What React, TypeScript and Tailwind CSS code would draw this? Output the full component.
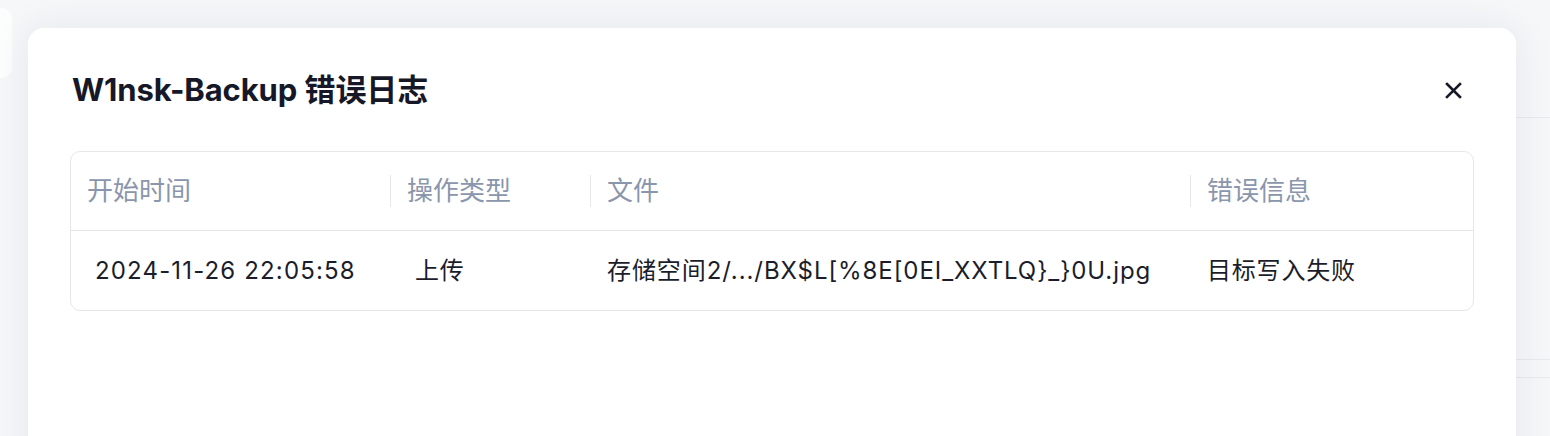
import React from 'react';

const FONT = 'font-["Inter","Noto_Sans_CJK_SC",sans-serif]';

interface LogRow {
  start: string;
  op: string;
  file: string;
  error: string;
}

const rows: LogRow[] = [
  {
    start: '2024-11-26 22:05:58',
    op: '上传',
    file: '存储空间2/.../BX$L[%8E[0EI_XXTLQ}_}0U.jpg',
    error: '目标写入失败',
  },
];

const HeaderCell: React.FC<{ label: string; divider?: boolean; width: string }> = ({ label, divider, width }) => (
  <div className={`${width} flex items-center h-full`}>
    {divider && <div className="w-px h-[32px] bg-[#e6e7ea] shrink-0" />}
    <span className="pl-[16px] text-[26px] leading-none text-[#8a96ac]">{label}</span>
  </div>
);

export default function App() {
  return (
    <div className={`${FONT} relative w-[1550px] h-[436px] overflow-hidden bg-[#f6f7f9]`}>
      {/* page behind the overlay */}
      <div className="flex h-full">
        <div className="w-[12px] mt-[8px] h-[70px] bg-white rounded-r-[10px] opacity-70" />
        <div className="flex-1 flex flex-col pt-[117px]">
          <div className="h-px bg-[#e9e9ee] ml-auto w-[40px]" />
          <div className="h-[241px]" />
          <div className="h-px bg-[#e9e9ee] ml-auto w-[40px]" />
          <div className="h-[17px]" />
          <div className="h-px bg-[#e9e9ee] ml-auto w-[40px]" />
        </div>
      </div>

      {/* modal */}
      <div className="absolute left-[28px] top-[28px] w-[1488px] h-[460px] bg-white rounded-[16px] shadow-[0_0_40px_rgba(30,35,60,0.08)]">
        <div className="flex items-center justify-between pl-[44px] pr-[54px] pt-[32px] h-[90px]">
          <h1 className="text-[31px] font-bold text-[#161827] leading-none tracking-[-0.1px]">W1nsk-Backup 错误日志</h1>
          <button aria-label="关闭" className="text-[#161827] mt-[2px]">
            <svg width="17" height="17" viewBox="0 0 17 17" fill="none" stroke="currentColor" strokeWidth="2.6" strokeLinecap="square">
              <path d="M2 2 L15 15 M15 2 L2 15" />
            </svg>
          </button>
        </div>

        <div className="mx-[42px] mt-[33px] border border-[#e6e7ea] rounded-[10px] overflow-hidden">
          <div className="flex h-[79px] border-b border-[#e6e7ea]">
            <HeaderCell label="开始时间" width="w-[319px]" />
            <HeaderCell label="操作类型" divider width="w-[200px]" />
            <HeaderCell label="文件" divider width="w-[600px]" />
            <HeaderCell label="错误信息" divider width="flex-1" />
          </div>
          {rows.map((r, i) => (
            <div key={i} className="flex h-[79px] items-center text-[24px] tracking-[0.8px] leading-none text-[#1b1d2a]">
              <div className="w-[319px] pl-[24px] whitespace-nowrap tracking-[1.15px]">{r.start}</div>
              <div className="w-[200px] pl-[25px]">{r.op}</div>
              <div className="w-[600px] pl-[17px] whitespace-nowrap tracking-[0.92px]">{r.file}</div>
              <div className="flex-1 pl-[17px]">{r.error}</div>
            </div>
          ))}
        </div>
      </div>
    </div>
  );
}
